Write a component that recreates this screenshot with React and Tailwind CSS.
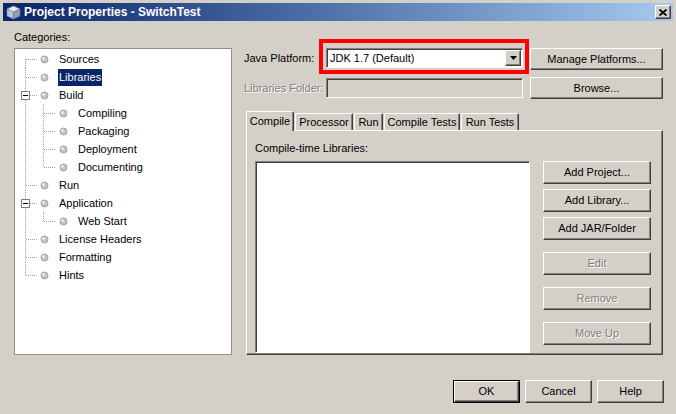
import React from 'react'

const raised =
  'border border-t-white border-l-white border-r-[#404040] border-b-[#404040] shadow-[inset_-1px_-1px_0_#808080] bg-[#d4d0c8]'
const sunken =
  'border border-t-[#808080] border-l-[#808080] border-r-white border-b-white shadow-[inset_1px_1px_0_#404040]'
const disabledText = 'text-[#808080] [text-shadow:1px_1px_0_#ffffff]'

const Btn = ({ children, className = '', disabled }) => (
  <div className={`flex items-center justify-center ${raised} ${className}`}>
    <span className={disabled ? disabledText : 'text-black'}>{children}</span>
  </div>
)

const tree = [
  { label: 'Sources', level: 0, first: true },
  { label: 'Libraries', level: 0, selected: true },
  { label: 'Build', level: 0, expand: true },
  { label: 'Compiling', level: 1 },
  { label: 'Packaging', level: 1 },
  { label: 'Deployment', level: 1 },
  { label: 'Documenting', level: 1, lastChild: true },
  { label: 'Run', level: 0 },
  { label: 'Application', level: 0, expand: true },
  { label: 'Web Start', level: 1, lastChild: true },
  { label: 'License Headers', level: 0 },
  { label: 'Formatting', level: 0 },
  { label: 'Hints', level: 0, last: true },
]

const dot = { stroke: '#a0a0a0', strokeWidth: 1, strokeDasharray: '1 1' }

const Ball = ({ cx }) => (
  <g>
    <circle cx={cx} cy={9.5} r={3.5} fill="#c4c4c4" stroke="#a4a4a4" />
    <circle cx={cx - 1} cy={8.5} r={1.3} fill="#f4f4f4" />
  </g>
)

const TreeRow = ({ row }) => {
  const w = row.level === 0 ? 43 : 62
  const y1 = row.first ? 9 : 0
  const y2 = row.last ? 10 : 18
  return (
    <div className="flex h-[18px] items-center">
      <svg width={w} height={18} className="shrink-0">
        <line x1={10.5} y1={y1} x2={10.5} y2={y2} {...dot} />
        {row.level === 0 && (
          <>
            <line x1={row.expand ? 15 : 11} y1={9.5} x2={22} y2={9.5} {...dot} />
            {row.expand && (
              <>
                <rect x={6.5} y={5.5} width={8} height={8} fill="#fff" stroke="#808080" />
                <line x1={8} y1={9.5} x2={13} y2={9.5} stroke="#000" />
              </>
            )}
            <Ball cx={29.5} />
          </>
        )}
        {row.level === 1 && (
          <>
            <line x1={28.5} y1={0} x2={28.5} y2={row.lastChild ? 10 : 18} {...dot} />
            <line x1={29} y1={9.5} x2={40} y2={9.5} {...dot} />
            <Ball cx={48.5} />
          </>
        )}
      </svg>
      <span
        className={`h-[17px] px-[1px] leading-[17px] whitespace-nowrap ${
          row.selected ? 'bg-[#0a246a] text-white' : 'text-black'
        }`}
      >
        {row.label}
      </span>
    </div>
  )
}

const tabs = [
  { label: 'Compile', w: 'w-[48px]', active: true },
  { label: 'Processor', w: 'w-[58px]' },
  { label: 'Run', w: 'w-[29px]' },
  { label: 'Compile Tests', w: 'w-[76px]' },
  { label: 'Run Tests', w: 'w-[58px]' },
]

export default function App() {
  return (
    <div className="flex h-[414px] w-[676px] flex-col overflow-hidden bg-[#d4d0c8] px-[3px] pt-[3px] font-['Liberation_Sans',Arial,sans-serif] text-[11px] text-black">
      {/* Title bar */}
      <div className="flex h-[18px] shrink-0 items-center bg-linear-to-r from-[#0a246a] to-[#a6caf0] pl-[3px] pr-[2px]">
        <svg width="15" height="15" viewBox="0 0 15 15" className="shrink-0">
          <path d="M7.5 1 L14 4 L7.5 7 L1 4 Z" fill="#e8eef6" stroke="#8090a8" strokeWidth="0.6" />
          <path d="M1 4 L7.5 7 L7.5 14 L1 11 Z" fill="#b8c4d4" stroke="#8090a8" strokeWidth="0.6" />
          <path d="M14 4 L7.5 7 L7.5 14 L14 11 Z" fill="#8fa0b8" stroke="#6a7890" strokeWidth="0.6" />
        </svg>
        <span className="ml-[3px] text-[12px] font-bold leading-none text-white">
          Project Properties - SwitchTest
        </span>
        <div className={`ml-auto flex h-[14px] w-[16px] items-center justify-center ${raised}`}>
          <svg width="8" height="7" viewBox="0 0 8 7">
            <path d="M0.5 0.5 L7.5 6.5 M7.5 0.5 L0.5 6.5" stroke="#000" strokeWidth="1.8" />
          </svg>
        </div>
      </div>

      {/* Main */}
      <div className="flex h-[334px] shrink-0 pl-[11px]">
        {/* Categories */}
        <div className="flex w-[218px] flex-col">
          <div className="mt-[10px] h-[13px] leading-[13px]">Categories:</div>
          <div className="mt-[4px] h-[307px] border border-[#8e8f8f] bg-white pt-[1px]">
            {tree.map((r) => (
              <TreeRow key={r.label} row={r} />
            ))}
          </div>
        </div>

        {/* Right side */}
        <div className="ml-[12px] flex w-[419px] flex-col pt-[27px]">
          <div className="flex h-[22px] items-start">
            <div className="h-[20px] w-[82px] leading-[20px]">Java Platform:</div>
            <div className="relative h-[20px] w-[197px]">
              <div className={`flex h-full w-full items-center bg-white pl-[3px] ${sunken}`}>
                <span className="flex-1 leading-none">JDK 1.7 (Default)</span>
                <div className={`mr-[1px] flex h-[16px] w-[16px] items-center justify-center ${raised}`}>
                  <svg width="7" height="4" viewBox="0 0 7 4">
                    <path d="M0 0 H7 L3.5 4 Z" fill="#000" />
                  </svg>
                </div>
              </div>
              <div className="pointer-events-none absolute -top-[9px] -right-[6px] -bottom-[6px] -left-[7px] border-4 border-[#ff0000]" />
            </div>
            <Btn className="ml-[7px] h-[22px] w-[133px]">Manage Platforms...</Btn>
          </div>

          <div className="mt-[7px] flex h-[22px] items-start">
            <div className={`h-[22px] w-[82px] leading-[22px] ${disabledText}`}>Libraries Folder:</div>
            <div className={`mt-[1px] h-[20px] w-[197px] bg-[#d4d0c8] ${sunken}`} />
            <Btn className="ml-[7px] h-[22px] w-[133px]">Browse...</Btn>
          </div>

          {/* Tabs */}
          <div className="mt-[12px] ml-[2px] flex h-[19px] items-end">
            {tabs.map((t) =>
              t.active ? (
                <div
                  key={t.label}
                  className={`relative z-10 -mb-px flex h-[20px] ${t.w} items-start justify-center rounded-t-[2px] border-t border-l border-r border-t-white border-l-white border-r-[#404040] bg-[#d4d0c8] pt-[3px] shadow-[inset_-1px_0_0_#808080]`}
                >
                  <span className="leading-[13px]">{t.label}</span>
                </div>
              ) : (
                <div
                  key={t.label}
                  className={`ml-[1px] flex h-[17px] ${t.w} items-center justify-center rounded-t-[2px] border-t border-l border-r border-t-white border-l-white border-r-[#404040] shadow-[inset_-1px_0_0_#808080]`}
                >
                  <span className="leading-[13px]">{t.label}</span>
                </div>
              )
            )}
          </div>

          <div className="ml-[2px] flex h-[225px] w-[417px] flex-col border border-t-white border-l-white border-r-[#404040] border-b-[#404040] pl-[8px] pt-[11px] shadow-[inset_-1px_-1px_0_#808080]">
            <div className="h-[13px] leading-[13px]">Compile-time Libraries:</div>
            <div className="mt-[6px] flex items-start">
              <div className={`h-[192px] w-[275px] bg-white ${sunken}`} />
              <div className="ml-[13px] flex w-[108px] flex-col">
                <Btn className="h-[23px]">Add Project...</Btn>
                <Btn className="mt-[5px] h-[23px]">Add Library...</Btn>
                <Btn className="mt-[5px] h-[23px]">Add JAR/Folder</Btn>
                <Btn className="mt-[12px] h-[23px]" disabled>Edit</Btn>
                <Btn className="mt-[12px] h-[23px]" disabled>Remove</Btn>
                <Btn className="mt-[12px] h-[23px]" disabled>Move Up</Btn>
              </div>
            </div>
          </div>
        </div>
      </div>

      {/* Footer */}
      <div className="mt-[25px] flex justify-end gap-[5px] pr-[9px]">
        <div className="h-[23px] w-[67px] border border-black">
          <Btn className="h-full w-full">OK</Btn>
        </div>
        <Btn className="h-[23px] w-[67px]">Cancel</Btn>
        <Btn className="h-[23px] w-[67px]">Help</Btn>
      </div>
    </div>
  )
}
